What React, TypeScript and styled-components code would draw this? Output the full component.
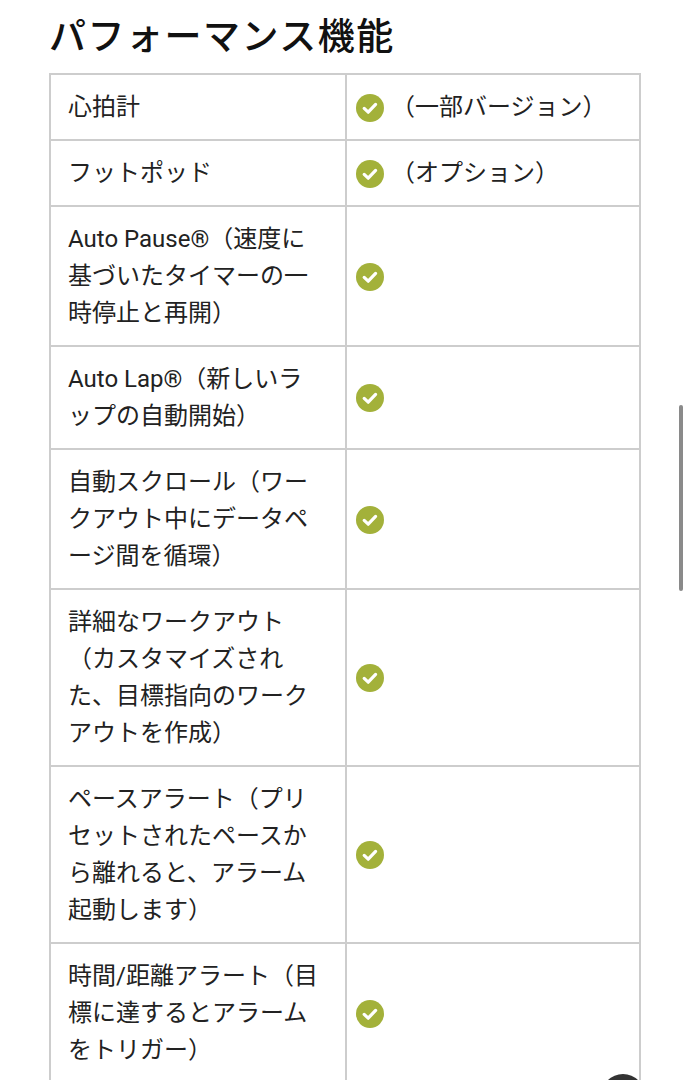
import React from "react";
import styled, { createGlobalStyle } from "styled-components";

const Global = createGlobalStyle`
  html, body { margin: 0; padding: 0; background: #fff; }
  body { font-family: Roboto, "Noto Sans CJK JP", sans-serif; color: #222; }
`;

const Page = styled.div`
  padding: 0 0 0 49px;
  width: 590px;
`;

const Title = styled.h2`
  margin: 14px 0 0 0;
  font-size: 37px;
  line-height: 48px;
  font-weight: 500;
  color: #111;
  letter-spacing: 1.5px;
  height: 59px;
`;

const Table = styled.table`
  border-collapse: collapse;
  width: 590px;
  table-layout: fixed;
`;

const Col = styled.col<{ $w: number }>`
  width: ${(p) => p.$w}px;
`;

const Cell = styled.td<{ $first?: boolean }>`
  border: 2px solid #cdcdcd;
  padding: ${(p) => (p.$first ? "14px 27px 13px 17px" : "14px 10px 13px 9px")};
  font-size: 24px;
  line-height: 37px;
  vertical-align: middle;
  color: #222;
`;

const CheckWrap = styled.div`
  display: flex;
  align-items: center;
  gap: 7px;
`;

const Note = styled.span`
  white-space: nowrap;
`;

const Scrollbar = styled.div`
  position: fixed;
  left: 679px;
  top: 405px;
  width: 4px;
  height: 186px;
  border-radius: 2px;
  background: #8a8a8a;
`;

const Fab = styled.div`
  position: fixed;
  left: 601px;
  top: 1074px;
  width: 44px;
  height: 44px;
  border-radius: 50%;
  background: #333;
`;

const Check = () => (
  <svg width="28" height="28" viewBox="0 0 28 28" aria-hidden>
    <circle cx="14" cy="14" r="14" fill="#a3b13a" />
    <path d="M8.2 14.4 L12.2 18.2 L19.6 10.4" fill="none" stroke="#fff" strokeWidth="3.2" strokeLinecap="round" strokeLinejoin="round" />
  </svg>
);

const rows: { label: string; note?: string }[] = [
  { label: "心拍計", note: "（一部バージョン）" },
  { label: "フットポッド", note: "（オプション）" },
  { label: "Auto Pause®（速度に基づいたタイマーの一時停止と再開）" },
  { label: "Auto Lap®（新しいラップの自動開始）" },
  { label: "自動スクロール（ワークアウト中にデータページ間を循環）" },
  { label: "詳細なワークアウト（カスタマイズされた、目標指向のワークアウトを作成）" },
  { label: "ペースアラート（プリセットされたペースから離れると、アラーム起動します）" },
  { label: "時間/距離アラート（目標に達するとアラームをトリガー）" },
  { label: "カスタマイズ可能なデータ画面" },
];

export default function App() {
  return (
    <>
      <Global />
      <Page>
        <Title>パフォーマンス機能</Title>
        <Table>
          <colgroup>
            <Col $w={296} />
            <Col $w={294} />
          </colgroup>
          <tbody>
            {rows.map((r) => (
              <tr key={r.label}>
                <Cell $first>{r.label}</Cell>
                <Cell>
                  <CheckWrap>
                    <Check />
                    {r.note && <Note>{r.note}</Note>}
                  </CheckWrap>
                </Cell>
              </tr>
            ))}
          </tbody>
        </Table>
      </Page>
      <Scrollbar />
      <Fab />
    </>
  );
}
